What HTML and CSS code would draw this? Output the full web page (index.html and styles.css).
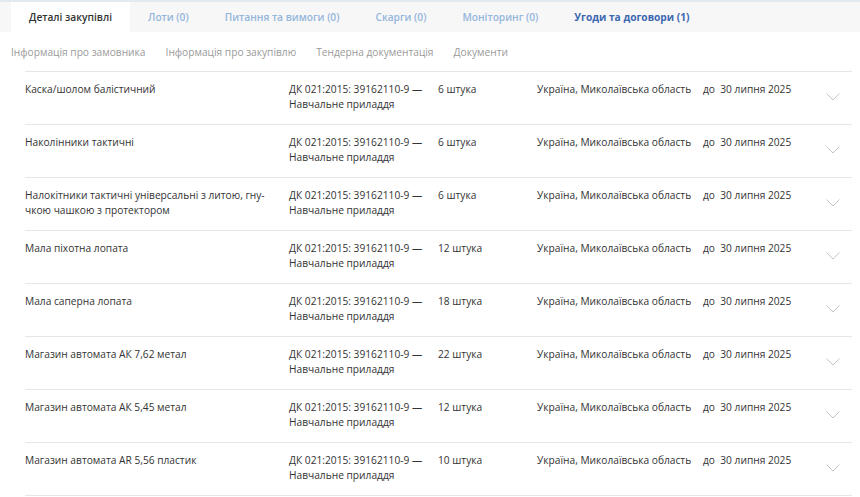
FILE: index.html
```html
<!DOCTYPE html>
<html lang="uk">
<head>
  <meta charset="UTF-8" />
  <title>Деталі закупівлі</title>
  <link rel="stylesheet" href="styles.css">
</head>
<body>

  <!-- Вкладки -->
  <div class="tabs">
    <a href="#" class="tab active">Деталі закупівлі</a>
    <a href="#" class="tab">Лоти (0)</a>
    <a href="#" class="tab">Питання та вимоги (0)</a>
    <a href="#" class="tab">Скарги (0)</a>
    <a href="#" class="tab">Моніторинг (0)</a>
    <a href="#" class="tab strong">Угоди та договори (1)</a>
  </div>

  <!-- Підменю -->
  <div class="subnav">
    <a href="#">Інформація про замовника</a>
    <a href="#">Інформація про закупівлю</a>
    <a href="#">Тендерна документація</a>
    <a href="#">Документи</a>
  </div>

  <!-- Список позицій -->
  <div class="items" id="items"></div>

  <script>
    var items = [
      ['Каска/шолом балістичний', '6 штука'],
      ['Наколінники тактичні', '6 штука'],
      ['Налокітники тактичні універсальні з литою, гну-<br>чкою чашкою з протектором', '6 штука'],
      ['Мала піхотна лопата', '12 штука'],
      ['Мала саперна лопата', '18 штука'],
      ['Магазин автомата АК 7,62 метал', '22 штука'],
      ['Магазин автомата АК 5,45 метал', '12 штука'],
      ['Магазин автомата AR 5,56 пластик', '10 штука']
    ];

    var list = document.getElementById('items');
    items.forEach(function (it) {
      var row = document.createElement('div');
      row.className = 'item';
      row.innerHTML =
        '<div class="name">' + it[0] + '</div>' +
        '<div class="cls">ДК 021:2015: 39162110-9 —<br>Навчальне приладдя</div>' +
        '<div class="qty">' + it[1] + '</div>' +
        '<div class="place">Україна, Миколаївська область</div>' +
        '<div class="date">до&nbsp; 30 липня 2025</div>' +
        '<div class="arrow"><svg width="14" height="8" viewBox="0 0 14 8"><path d="M0.5 0.5 L7 7 L13.5 0.5" fill="none" stroke="#c4c4c4" stroke-width="1"/></svg></div>';
      list.appendChild(row);
    });
  </script>
</body>
</html>
```

FILE: styles.css
```css
/* Reset */
* {
  margin: 0;
  padding: 0;
  box-sizing: border-box;
}

body {
  font-family: 'Open Sans', 'Noto Sans', sans-serif;
  font-size: 10.2px;
  color: #333;
  background: #fff;
}

a {
  text-decoration: none;
}

/* Вкладки */
.tabs {
  display: flex;
  background: #f7f7f7;
  border-top: 2px solid #e1e9f1;
  height: 32px;
  padding-left: 11px;
}

.tab {
  display: flex;
  align-items: center;
  padding: 0 18px;
  color: #94b6dd;
  font-weight: 600;
  font-size: 10.2px;
  white-space: nowrap;
}

.tab.active {
  background: #fff;
  color: #333;
}

.tab.strong {
  color: #3c68b1;
  font-weight: 700;
}

/* Підменю */
.subnav {
  display: flex;
  gap: 20px;
  padding: 13px 0 0 11px;
  height: 39px;
}

.subnav a {
  color: #9a9a9a;
  font-size: 10.2px;
}

/* Позиції */
.items {
  margin: 0 8px 0 25px;
  border-top: 1px solid #e6e6e6;
}

.item {
  display: grid;
  grid-template-columns: 264px 149px 99px 166px 1fr 26px;
  height: 53px;
  padding-top: 10px;
  line-height: 15px;
  border-bottom: 1px solid #e6e6e6;
}

.arrow {
  padding-top: 8px;
}
```
